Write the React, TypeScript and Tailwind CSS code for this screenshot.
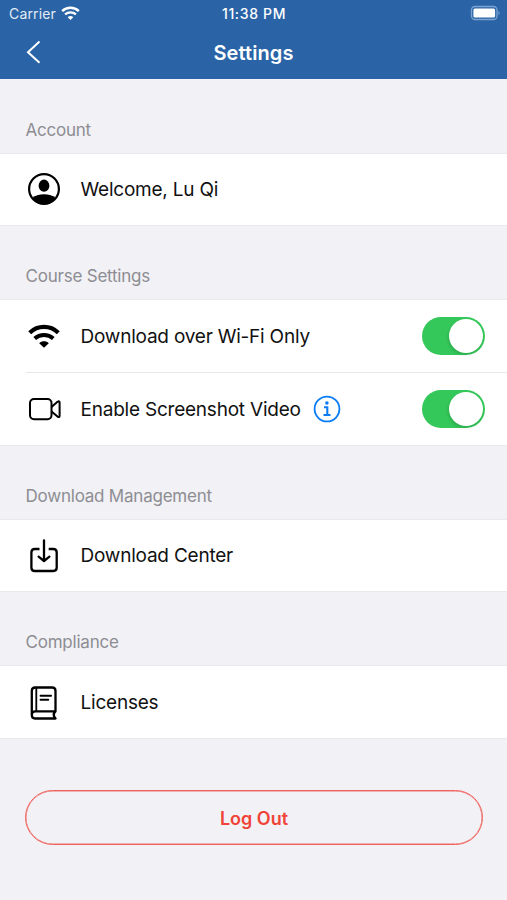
import { ReactNode } from "react";

function WifiGlyph({ className }: { className: string }) {
  return (
    <svg viewBox="0 0 32 24" className={className} fill="none" stroke="currentColor">
      <path d="M1.700 8.800C9.700 1 22.300 1 30.300 8.800" strokeWidth="4.200" />
      <path d="M6.700 14.500c5.300-4.700 13.300-4.700 18.600 0" strokeWidth="4" />
      <path d="M11.200 19.300c2.800-2.600 6.800-2.600 9.600 0L16 23.800z" fill="currentColor" stroke="none" />
    </svg>
  );
}

function ProfileIcon() {
  return (
    <svg viewBox="0 0 34 34" className="-mt-px h-[34px] w-[34px]">
      <defs>
        <clipPath id="face">
          <circle cx="17" cy="17" r="15" />
        </clipPath>
      </defs>
      <circle cx="17" cy="17" r="14.900" fill="none" stroke="#000" strokeWidth="2.200" />
      <ellipse cx="17" cy="13.700" rx="5.400" ry="6.100" />
      <path d="M5.500 26c4.500-5 18.500-5 23 0v8h-23z" clipPath="url(#face)" />
    </svg>
  );
}

function VideoIcon() {
  return (
    <svg viewBox="0 0 34 34" className="h-[34px] w-[34px]" fill="none" stroke="#000" strokeWidth="2" strokeLinejoin="round">
      <rect x="3" y="7" width="21.500" height="20.200" rx="4" />
      <path d="m24.500 15 6-5.200q2.100-1.200 2.100.8v13.200q0 2-2.100.8L24.500 19.400" />
    </svg>
  );
}

function DownloadIcon() {
  return (
    <svg viewBox="0 0 34 34" className="h-[34px] w-[34px]" fill="none" stroke="#000" strokeWidth="2.300" strokeLinecap="round" strokeLinejoin="round">
      <path d="M12.500 10H7.800Q4.400 10 4.400 13.400v15Q4.400 32 7.800 32h18.500q3.400 0 3.400-3.500v-15q0-3.500-3.400-3.500H21.700" strokeLinecap="butt" />
      <path d="M17 1.300v20.500M11.600 17.700 17 22l5.400-4.300" />
    </svg>
  );
}

function BookIcon() {
  return (
    <svg viewBox="0 0 34 34" className="mt-px h-[34px] w-[34px]" fill="none" stroke="#000" strokeWidth="2.300" strokeLinecap="round" strokeLinejoin="round">
      <path d="M28.500 25.300V4.900q0-3.400-3.400-3.400H8.200q-3.400 0-3.400 3.400V29q0 3.500 3.200 3.500h20.500M4.800 28.800q0-3.500 3.500-3.500h20.200q-3.500 3.200 0 7.200" />
      <path d="M9.300 2v23" strokeWidth="1.800" />
      <path d="M13.500 9.800h10.600M13.500 13.800h7.800" strokeWidth="1.900" />
    </svg>
  );
}

function InfoIcon() {
  return (
    <svg viewBox="0 0 28 28" className="ml-[12px] h-7 w-7" fill="none" stroke="#0a7cf5" strokeWidth="1.800">
      <circle cx="14" cy="14" r="12.400" />
      <path d="M11 12.200h3.300v8M10.500 20h7" strokeWidth="2.100" />
      <circle cx="13.900" cy="8" r="1.800" fill="#0a7cf5" stroke="none" />
    </svg>
  );
}

function Toggle() {
  return (
    <span className="ml-auto flex h-[38px] w-[63px] items-center justify-end rounded-full bg-[#34c759] pr-[2px]">
      <span className="h-[34px] w-[34px] rounded-full bg-white shadow-[-1px_2px_3px_rgba(0,0,0,0.12)]" />
    </span>
  );
}

function Row({ icon, label, short = false, children }: { icon: ReactNode; label: string; short?: boolean; children?: ReactNode }) {
  return (
    <div className={`flex items-center pr-[22px] pl-[27px] text-[19px] leading-[24px] text-[#111] ${short ? "h-[71px]" : "h-[72px]"}`}>
      <span className="mr-[19.500px] flex w-[34px] shrink-0 justify-center text-black">{icon}</span>
      <span className="pt-px tracking-[-0.220px]">{label}</span>
      {children}
    </div>
  );
}

function Section({ title, first = false, children }: { title: string; first?: boolean; children: ReactNode }) {
  return (
    <section>
      <h2 className={`flex items-end pb-[11px] pl-[25.500px] text-[17px] leading-[24px] tracking-[-0.220px] text-[#8d8d92] ${first ? "h-[74px]" : "h-[73px]"}`}>
        {title}
      </h2>
      <div className="border-y border-[#e9e9ed] bg-white">{children}</div>
    </section>
  );
}

export default function App() {
  return (
    <main className="h-[900px] w-[507px] overflow-hidden bg-[#f1f1f6] font-['Inter',sans-serif]">
      <header className="h-[79px] bg-[#2a64a7] text-white">
        <div className="grid h-[27px] grid-cols-3 items-center pr-[6px] pl-[9px]">
          <span className="flex items-center text-[14px] tracking-[0.150px] text-[#e2ebf5]">
            Carrier
            <WifiGlyph className="-mt-[2px] ml-[5px] h-[14px] w-[19px] text-white" />
          </span>
          <span className="pr-[2px] text-center text-[14px] font-medium tracking-[0.650px] whitespace-nowrap">11:38 PM</span>
          <svg viewBox="0 0 31 16" className="-mt-px h-4 w-[31px] justify-self-end">
            <rect x="1.500" y="1.500" width="25.500" height="13" rx="3.500" fill="none" stroke="#7ca3d0" strokeWidth="1.300" />
            <rect x="3.400" y="3.400" width="21.700" height="9.200" rx="1.500" fill="#fff" />
            <path d="M28.500 5.700q2.200 2.300 0 4.600z" fill="#7ca3d0" />
          </svg>
        </div>
        <div className="grid h-[50px] grid-cols-3 items-center pr-[25px] pl-[25px]">
          <svg viewBox="0 0 16 24" className="h-6 w-4" fill="none" stroke="#fff" strokeWidth="2">
            <path d="M14.500 1.500 3 12.200l11.500 10.500" />
          </svg>
          <h1 className="pt-px text-center text-[20px] font-semibold tracking-[0.100px]">Settings</h1>
        </div>
      </header>

      <Section title="Account" first>
        <Row icon={<ProfileIcon />} label="Welcome, Lu Qi" short />
      </Section>
      <Section title="Course Settings">
        <Row icon={<WifiGlyph className="h-6 w-8" />} label="Download over Wi-Fi Only">
          <Toggle />
        </Row>
        <div className="ml-[26px] h-px bg-[#e7e7ea]" />
        <Row icon={<VideoIcon />} label="Enable Screenshot Video">
          <InfoIcon />
          <Toggle />
        </Row>
      </Section>
      <Section title="Download Management">
        <Row icon={<DownloadIcon />} label="Download Center" short />
      </Section>
      <Section title="Compliance">
        <Row icon={<BookIcon />} label="Licenses" />
      </Section>

      <button className="mt-[51px] ml-[25px] flex h-[55px] w-[458px] items-center justify-center rounded-full border border-[#f0625d] pt-px text-[18px] font-semibold text-[#f04438] shadow-[inset_0_0_0_0.500px_#f0716d]">
        Log Out
      </button>
    </main>
  );
}
